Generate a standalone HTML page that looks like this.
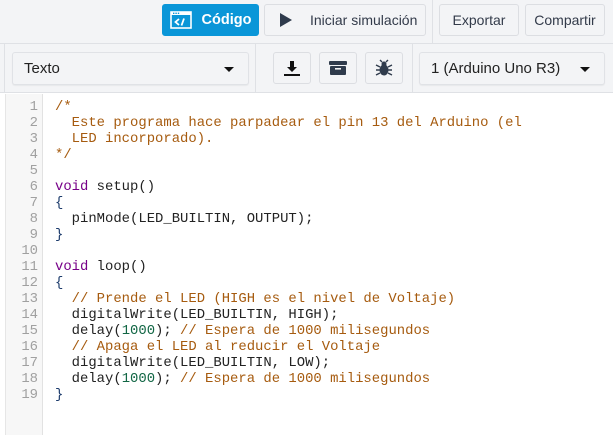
<!DOCTYPE html>
<html><head><meta charset="utf-8"><style>
*{box-sizing:border-box;margin:0;padding:0}
body{width:613px;height:435px;overflow:hidden;background:#fff;font-family:"Liberation Sans",sans-serif;position:relative}
.top{position:absolute;left:0;top:0;width:613px;height:44px;background:#f3f4f6;border-bottom:1px solid #dfe1e5}
.bar{position:absolute;left:0;top:44px;width:613px;height:49px;background:#f3f4f6;border-bottom:1px solid #dfe1e5}
.btn{position:absolute;height:32px;border:1px solid #dcdee2;border-radius:3px;background:#f3f4f6;color:#333b4a;font-size:14px;display:flex;align-items:center;justify-content:center}
.vd{position:absolute;width:1px;background:#dfe1e5}
.sel{position:absolute;height:33px;border:1px solid #e0e2e6;border-radius:3px;background:#f3f4f6;font-size:15px;color:#222;display:flex;align-items:center;padding-left:11px;box-shadow:0 1px 1px rgba(0,0,0,.05)}
.caret{position:absolute;right:14px;top:14px;width:0;height:0;border-left:5px solid transparent;border-right:5px solid transparent;border-top:5px solid #111}
.gut{position:absolute;left:5px;top:94px;width:38px;height:341px;background:#f7f7f7;border-right:1px solid #e2e2e2;border-left:1px solid #e6e6e6}
.ln{position:absolute;left:5px;top:99px;width:33px;text-align:right;font:13.9px/16px "Liberation Mono",monospace;color:#a0a0a0;white-space:pre}
.code{position:absolute;left:55px;top:99px;font:13.9px/16px "Liberation Mono",monospace;color:#222;white-space:pre}
.c{color:#a65b0f}.k{color:#770088}.n{color:#116644}.b{color:#1b3a6b}
</style></head><body>
<div class="top">
 <div class="btn" style="left:162px;top:4px;width:97px;background:#0a96d8;border-color:#0a96d8;color:#fff;font-weight:bold;font-size:14.5px">
  <svg width="22" height="18" viewBox="0 0 22 18" style="margin-right:10px"><rect x="1" y="1" width="20" height="16" fill="none" stroke="#fff" stroke-width="1.6"/><rect x="1" y="1" width="20" height="3" fill="#fff"/><rect x="3" y="1.6" width="1.4" height="1.4" fill="#0a96d8"/><rect x="5.4" y="1.6" width="1.4" height="1.4" fill="#0a96d8"/><rect x="7.8" y="1.6" width="1.4" height="1.4" fill="#0a96d8"/><path d="M9 8 L5.5 11 L9 14 M14 7.5 L11.5 14.5" stroke="#fff" stroke-width="1.8" fill="none"/></svg>Código</div>
 <div class="btn" style="left:264px;top:4px;width:162px;justify-content:flex-start;padding-left:15px"><svg width="12" height="14" viewBox="0 0 12 14" style="margin-right:18px"><path d="M0 0L12 7L0 14Z" fill="#2f3b4c"/></svg>Iniciar simulación</div>
 <div class="vd" style="left:432px;top:0;height:44px"></div>
 <div class="btn" style="left:439px;top:4px;width:80px">Exportar</div>
 <div class="btn" style="left:525px;top:4px;width:80px">Compartir</div>
</div>
<div class="bar">
 <div class="vd" style="left:4px;top:0;height:49px"></div>
 <div class="sel" style="left:12px;top:8px;width:237px">Texto<div class="caret"></div></div>
 <div class="vd" style="left:255px;top:0;height:49px"></div>
 <div class="btn" style="left:273px;top:8px;width:38px"><svg width="18" height="18" viewBox="0 0 18 18"><path d="M7 2H11V8H14L9 13L4 8H7Z" fill="#111"/><rect x="1" y="15" width="16" height="2" fill="#111"/></svg></div>
 <div class="btn" style="left:319px;top:8px;width:38px"><svg width="20" height="16" viewBox="0 0 20 16"><rect x="1" y="1" width="18" height="4" rx="1" fill="#2f3b4c"/><rect x="2" y="6" width="16" height="9" rx="1" fill="#2f3b4c"/><rect x="7" y="8" width="6" height="1.6" fill="#f3f4f6"/></svg></div>
 <div class="btn" style="left:365px;top:8px;width:38px"><svg width="18" height="18" viewBox="0 0 18 18"><ellipse cx="9" cy="11" rx="4.5" ry="5.5" fill="#2f3b4c"/><circle cx="9" cy="5" r="2.5" fill="#2f3b4c"/><path d="M5 8L1 6M5 11H1M5 14L1 16M13 8L17 6M13 11H17M13 14L17 16M7 3L5 1M11 3L13 1" stroke="#2f3b4c" stroke-width="1.4"/></svg></div>
 <div class="vd" style="left:412px;top:0;height:49px"></div>
 <div class="sel" style="left:419px;top:8px;width:186px">1 (Arduino Uno R3)<div class="caret"></div></div>
</div>
<div class="gut"></div>
<div class="ln">1
2
3
4
5
6
7
8
9
10
11
12
13
14
15
16
17
18
19</div>
<div class="code"><span class="c">/*
  Este programa hace parpadear el pin 13 del Arduino (el
  LED incorporado).
*/</span>

<span class="k">void</span> setup()
<span class="b">{</span>
  pinMode(LED_BUILTIN, OUTPUT);
<span class="b">}</span>

<span class="k">void</span> loop()
<span class="b">{</span>
  <span class="c">// Prende el LED (HIGH es el nivel de Voltaje)</span>
  digitalWrite(LED_BUILTIN, HIGH);
  delay(<span class="n">1000</span>); <span class="c">// Espera de 1000 milisegundos</span>
  <span class="c">// Apaga el LED al reducir el Voltaje</span>
  digitalWrite(LED_BUILTIN, LOW);
  delay(<span class="n">1000</span>); <span class="c">// Espera de 1000 milisegundos</span>
<span class="b">}</span></div>
</body></html>
